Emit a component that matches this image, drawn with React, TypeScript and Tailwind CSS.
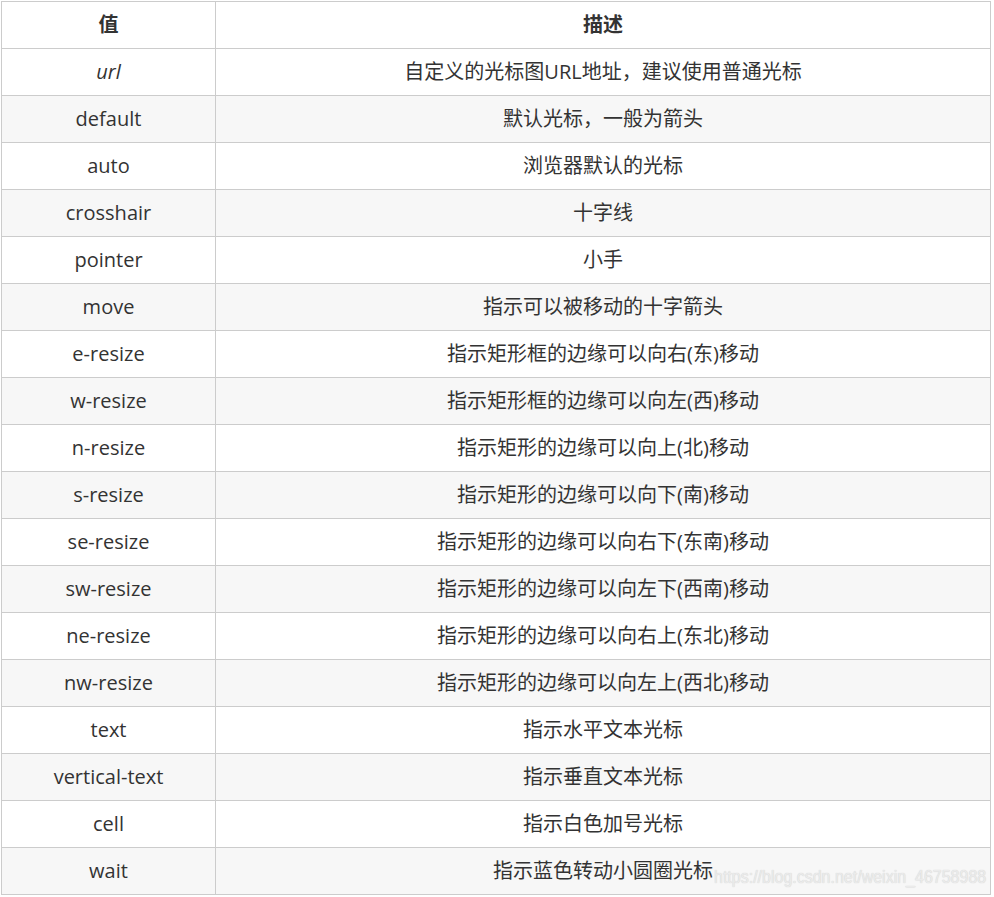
import React from "react";

const rows: [string, string][] = [
  ["url", "自定义的光标图URL地址，建议使用普通光标"],
  ["default", "默认光标，一般为箭头"],
  ["auto", "浏览器默认的光标"],
  ["crosshair", "十字线"],
  ["pointer", "小手"],
  ["move", "指示可以被移动的十字箭头"],
  ["e-resize", "指示矩形框的边缘可以向右(东)移动"],
  ["w-resize", "指示矩形框的边缘可以向左(西)移动"],
  ["n-resize", "指示矩形的边缘可以向上(北)移动"],
  ["s-resize", "指示矩形的边缘可以向下(南)移动"],
  ["se-resize", "指示矩形的边缘可以向右下(东南)移动"],
  ["sw-resize", "指示矩形的边缘可以向左下(西南)移动"],
  ["ne-resize", "指示矩形的边缘可以向右上(东北)移动"],
  ["nw-resize", "指示矩形的边缘可以向左上(西北)移动"],
  ["text", "指示水平文本光标"],
  ["vertical-text", "指示垂直文本光标"],
  ["cell", "指示白色加号光标"],
  ["wait", "指示蓝色转动小圆圈光标"],
];

export default function App() {
  return (
    <div className="w-[994px] h-[897px] bg-white pt-px pl-px relative" style={{ fontFamily: '"Open Sans", "Noto Sans CJK SC", sans-serif' }}>
      <table className="border-collapse text-[20px] text-[#333] w-[990px]">
        <thead>
          <tr className="h-[47px]">
            <th className="border border-[#ccc] w-[214px] font-bold text-center p-0">值</th>
            <th className="border border-[#ccc] font-bold text-center p-0">描述</th>
          </tr>
        </thead>
        <tbody>
          {rows.map(([k, v], i) => (
            <tr key={k} className={`h-[47px] ${i % 2 === 1 ? "bg-[#f7f7f7]" : "bg-white"}`}>
              <td className={`border border-[#ccc] text-center p-0 leading-[28px] ${k === "url" ? "italic" : ""}`}>{k}</td>
              <td className="border border-[#ccc] text-center p-0 leading-[28px]">{v}</td>
            </tr>
          ))}
        </tbody>
      </table>
      <div
        className="absolute left-[714px] top-[870px] text-[16px] text-[#ebebeb] leading-none scale-y-[1.12] origin-bottom-left"
        style={{ fontFamily: '"Liberation Sans", Arial, sans-serif', textShadow: "0 0 1px #c8c8c8" }}
      >
        https://blog.csdn.net/weixin_46758988
      </div>
    </div>
  );
}
